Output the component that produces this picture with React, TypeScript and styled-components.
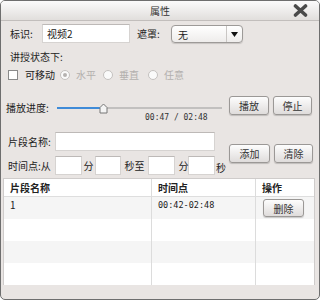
import styled, { createGlobalStyle } from "styled-components";

const GlobalStyle = createGlobalStyle`
  html, body {
    margin: 0;
    padding: 0;
    background: #ffffff;
  }
  body {
    font-family: "Noto Sans CJK SC", "Liberation Sans", sans-serif;
    font-size: 10px;
    color: #222;
  }
  * { box-sizing: border-box; }
`;

const segments = [{ name: "1", time: "00:42-02:48" }, null, null, null];

const App = () => {
  return (
    <>
      <GlobalStyle />
      <Window>
        <TitleBar>
          <span />
          <Title>属性</Title>
          <CloseButton>
            <svg width="15" height="13" viewBox="0 0 15 13">
              <path
                d="M2.5 2 L12.5 11 M12.5 2 L2.5 11"
                stroke="#4a4a4a"
                strokeWidth="3.6"
                strokeLinecap="round"
              />
            </svg>
          </CloseButton>
        </TitleBar>

        <Content>
          <Row $h={19} $pl={9}>
            <Label $w={32}>标识:</Label>
            <TextInput $w={88} defaultValue="视频2" />
            <Label $w={34} $ml={7}>
              遮罩:
            </Label>
            <Select>
              <SelectValue>无</SelectValue>
              <SelectArrow>
                <svg width="7" height="5" viewBox="0 0 7 5">
                  <path d="M0 0 H7 L3.5 5 Z" fill="#111" />
                </svg>
              </SelectArrow>
            </Select>
          </Row>

          <Row $h={16} $pl={9} $mt={6}>
            <Label>讲授状态下:</Label>
          </Row>

          <Row $h={16} $pl={7} $mt={2}>
            <CheckBox />
            <Label $ml={7}>可移动</Label>
            <RadioItem $ml={5}>
              <Radio $checked />
              水平
            </RadioItem>
            <RadioItem $ml={7}>
              <Radio />
              垂直
            </RadioItem>
            <RadioItem $ml={9}>
              <Radio />
              任意
            </RadioItem>
          </Row>

          <Row $h={19} $pl={5} $mt={13} $align="flex-end">
            <Label $w={51} $lh={14}>
              播放进度:
            </Label>
            <Slider>
              <svg width="165" height="14" viewBox="0 0 165 14">
                <line x1="0" y1="7" x2="165" y2="7" stroke="#9c9c9c" strokeWidth="1.2" />
                <line x1="0" y1="7" x2="45" y2="7" stroke="#3f8bd8" strokeWidth="2.2" />
                <path
                  d="M46.5 3 L50 6.5 L50 12 L43 12 L43 6.5 Z"
                  fill="#f4f4f4"
                  stroke="#777"
                  strokeWidth="1"
                />
              </svg>
            </Slider>
            <ButtonGroup $ml={7}>
              <Button $w={40}>播放</Button>
              <Button $w={39}>停止</Button>
            </ButtonGroup>
          </Row>

          <TimeText>00:47 / 02:48</TimeText>

          <SegmentForm>
            <FormFields>
              <Row $h={19} $pl={7}>
                <Label $w={47}>片段名称:</Label>
                <TextInput $w={160} />
              </Row>
              <Row $h={19} $pl={7} $mt={5}>
                <Label $w={47}>时间点:从</Label>
                <TextInput $w={27} />
                <Unit $w={13}>分</Unit>
                <TextInput $w={26} />
                <Unit $w={27}>秒至</Unit>
                <TextInput $w={27} />
                <Unit $w={13} $dx={2}>
                  分
                </Unit>
                <TextInput $w={27} />
                <Unit $w={12} $dy={2}>
                  秒
                </Unit>
              </Row>
            </FormFields>
            <ButtonGroup $ml={2}>
              <Button $w={41}>添加</Button>
              <Button $w={39}>清除</Button>
            </ButtonGroup>
          </SegmentForm>

          <Table>
            <HeaderCell>片段名称</HeaderCell>
            <HeaderCell>时间点</HeaderCell>
            <HeaderCell>操作</HeaderCell>
            {segments.map((seg, i) => (
              <TableRow key={i} $striped={i % 2 === 0}>
                <Cell>{seg?.name}</Cell>
                <Cell $mono>{seg?.time}</Cell>
                <Cell $action>
                  {seg && (
                    <Button $w={41} $h={18}>
                      删除
                    </Button>
                  )}
                </Cell>
              </TableRow>
            ))}
          </Table>
        </Content>
      </Window>
    </>
  );
};

export default App;

const Window = styled.div`
  width: 320px;
  height: 300px;
  border: 1px solid #6e6e6e;
  border-radius: 5px;
  background: #e9e5e3;
  overflow: hidden;
  display: flex;
  flex-direction: column;
`;

const TitleBar = styled.div`
  height: 20px;
  flex: none;
  display: grid;
  grid-template-columns: 1fr auto 1fr;
  align-items: center;
  background: linear-gradient(#fbfbfb, #e1dedc);
  border-bottom: 1px solid #c2bebc;
`;

const Title = styled.div`
  font-size: 10px;
  color: #333;
  line-height: 19px;
`;

const CloseButton = styled.div`
  justify-self: end;
  margin-right: 11px;
  display: flex;
  align-items: center;
  cursor: pointer;
`;

const Content = styled.div`
  padding-top: 3px;
  display: flex;
  flex-direction: column;
`;

const Row = styled.div<{ $h: number; $pl?: number; $mt?: number; $align?: string }>`
  display: flex;
  align-items: ${(p) => p.$align || "center"};
  height: ${(p) => p.$h}px;
  padding-left: ${(p) => p.$pl || 0}px;
  margin-top: ${(p) => p.$mt || 0}px;
`;

const Label = styled.span<{ $w?: number; $ml?: number; $lh?: number }>`
  flex: none;
  ${(p) => (p.$w ? `width: ${p.$w}px;` : "")}
  margin-left: ${(p) => p.$ml || 0}px;
  line-height: ${(p) => p.$lh || 16}px;
  white-space: nowrap;
  color: #222;
`;

const TextInput = styled.input<{ $w: number }>`
  flex: none;
  width: ${(p) => p.$w}px;
  height: 19px;
  padding: 0 4px;
  border: 1px solid #d6d3d1;
  border-top-color: #bdb9b7;
  background: #fff;
  font-family: "Noto Sans CJK SC", "Liberation Sans", sans-serif;
  font-size: 10px;
  color: #222;
  outline: none;
`;

const Select = styled.div`
  flex: none;
  width: 72px;
  height: 18px;
  margin-top: 1px;
  display: flex;
  border: 1px solid #9d9a98;
  border-radius: 4px;
  background: linear-gradient(#ffffff, #eeeceb);
  box-shadow: 0 1px 1px rgba(0, 0, 0, 0.15);
`;

const SelectValue = styled.div`
  flex: 1;
  padding-left: 6px;
  line-height: 17px;
`;

const SelectArrow = styled.div`
  width: 16px;
  border-left: 1px solid #c9c6c4;
  display: flex;
  align-items: center;
  justify-content: center;
`;

const CheckBox = styled.span`
  flex: none;
  width: 10px;
  height: 10px;
  border: 1px solid #8a8a8a;
  background: #fff;
`;

const RadioItem = styled.span<{ $ml: number }>`
  display: flex;
  align-items: center;
  gap: 6px;
  margin-left: ${(p) => p.$ml}px;
  color: #b3b0ae;
  line-height: 16px;
`;

const Radio = styled.span<{ $checked?: boolean }>`
  flex: none;
  width: 10px;
  height: 10px;
  border-radius: 50%;
  border: 1px solid #c4c1bf;
  background: #fafafa;
  display: flex;
  align-items: center;
  justify-content: center;

  &::after {
    content: "";
    display: ${(p) => (p.$checked ? "block" : "none")};
    width: 4px;
    height: 4px;
    border-radius: 50%;
    background: #b5b2b0;
  }
`;

const Slider = styled.div`
  flex: none;
  width: 165px;
  height: 14px;
  display: flex;
`;

const ButtonGroup = styled.div<{ $ml?: number }>`
  display: flex;
  gap: 4px;
  margin-left: ${(p) => p.$ml || 0}px;
  align-self: center;
`;

const Button = styled.button<{ $w: number; $h?: number }>`
  width: ${(p) => p.$w}px;
  height: ${(p) => p.$h || 19}px;
  padding: 0;
  border: 1px solid #9b9896;
  border-radius: 3px;
  background: linear-gradient(#fdfdfd, #dfdcdb);
  box-shadow: 0 1px 1px rgba(0, 0, 0, 0.18);
  font-family: "Noto Sans CJK SC", "Liberation Sans", sans-serif;
  font-size: 10px;
  color: #333;
  cursor: pointer;
`;

const TimeText = styled.div`
  height: 10px;
  margin-top: -2px;
  padding-left: 144px;
  font-family: "DejaVu Sans Mono", "Liberation Mono", monospace;
  font-size: 8px;
  line-height: 10px;
  color: #333;
`;

const SegmentForm = styled.div`
  display: flex;
  margin-top: 9px;
`;

const FormFields = styled.div`
  flex: none;
  width: 226px;
  display: flex;
  flex-direction: column;
`;

const Unit = styled.span<{ $w: number; $dy?: number; $dx?: number }>`
  flex: none;
  width: ${(p) => p.$w}px;
  text-align: center;
  line-height: 16px;
  position: relative;
  top: ${(p) => p.$dy || 0}px;
  left: ${(p) => p.$dx || 0}px;
`;

const Table = styled.div`
  margin: 3px 0 0 2px;
  width: 312px;
  height: 107px;
  border: 1px solid #cfcccb;
  background: #fff;
  display: grid;
  grid-template-columns: 148px 104px 1fr;
  grid-template-rows: 18px repeat(4, 22px);
`;

const HeaderCell = styled.div`
  padding-left: 6px;
  font-weight: bold;
  line-height: 17px;
  border-bottom: 1px solid #dedede;
  border-right: 1px solid #dcdcdc;
  color: #222;

  &:nth-child(3) {
    border-right: none;
  }
`;

const TableRow = styled.div<{ $striped: boolean }>`
  display: contents;

  & > div {
    background: ${(p) => (p.$striped ? "#f5f5f5" : "#ffffff")};
  }
`;

const Cell = styled.div<{ $mono?: boolean; $action?: boolean }>`
  padding-left: ${(p) => (p.$action ? 7 : 6)}px;
  padding-top: ${(p) => (p.$action ? 2 : 1)}px;
  line-height: 14px;
  border-right: 1px solid #dcdcdc;
  ${(p) =>
    p.$mono
      ? `font-family: "DejaVu Sans Mono", "Liberation Mono", monospace; font-size: 8.5px; line-height: 15px;`
      : ""}
  ${(p) => (p.$action ? "border-right: none;" : "")}
`;
